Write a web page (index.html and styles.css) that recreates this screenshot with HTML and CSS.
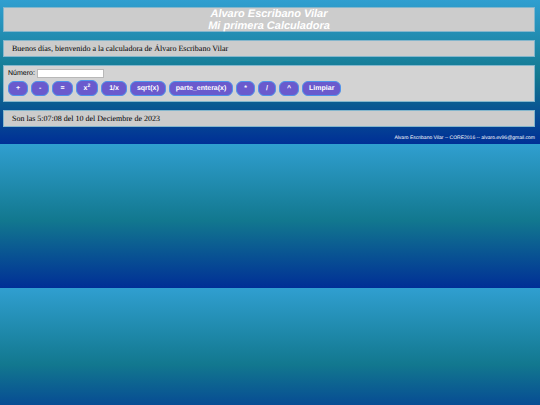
FILE: index.html
```
<!DOCTYPE html>
<html lang="es">
<head>
  <meta charset="UTF-8">
  <meta name="viewport" content="width=device-width, initial-scale=1.0">
  <title>Mi primera Calculadora</title>
  <link rel="stylesheet" href="styles.css">
</head>
<body>

  <header class="titulo">
    <h1>Alvaro Escribano Vilar<br>Mi primera Calculadora</h1>
  </header>

  <div class="mensaje">Buenos días, bienvenido a la calculadora de Álvaro Escribano Vilar</div>

  <main class="calculadora">
    <div class="entrada">
      <label for="numero">Número:</label>
      <input type="text" id="numero">
    </div>
    <div class="botones">
      <button type="button">+</button>
      <button type="button">-</button>
      <button type="button">=</button>
      <button type="button" class="potencia">x<sup>2</sup></button>
      <button type="button">1/x</button>
      <button type="button" class="largo">sqrt(x)</button>
      <button type="button" class="largo">parte_entera(x)</button>
      <button type="button">*</button>
      <button type="button">/</button>
      <button type="button">^</button>
      <button type="button" class="largo">Limpiar</button>
    </div>
  </main>

  <div class="mensaje">Son las 5:07:08 del 10 del Deciembre de 2023</div>

  <footer class="pie">Alvaro Escribano Vilar -- CORE2016 -- alvaro.ev96@gmail.com</footer>

</body>
</html>
```

FILE: styles.css
```
* {
  box-sizing: border-box;
}

/* El degradado se repite cada vez que termina el contenido */
body {
  display: flex;
  flex-direction: column;
  gap: 8px;
  margin: 0;
  padding: 7px 5px 3px 3px;
  font-family: "Liberation Sans", Arial, sans-serif;
  text-rendering: geometricPrecision;
  background: linear-gradient(#309fd0, #12788f 53%, #002f96);
}

.titulo, .mensaje, .calculadora {
  border: 1px solid #84b6cc;
  background-color: #cccccc;
}

.titulo {
  height: 25px;
}

.titulo h1 {
  margin: 0;
  color: white;
  font-size: 11px;
  font-style: italic;
  line-height: 12px;
  text-align: center;
}

.mensaje {
  padding: 0 8px;
  font-family: "Liberation Serif", "Times New Roman", serif;
  font-size: 8px;
  line-height: 15px;
}

.calculadora {
  padding: 3px 4px 5px;
  background-color: #d3d3d3;
}

.entrada {
  display: flex;
  align-items: center;
  gap: 2px;
  font-size: 7px;
  line-height: 9px;
}

.entrada input {
  width: 67px;
  height: 9px;
  padding: 0 1px;
  border: 1px solid #b8b8b8;
  background-color: white;
  font-size: 7px;
}

.botones {
  display: flex;
  align-items: flex-end;
  gap: 3px;
  margin-top: 2px;
}

button {
  padding: 3px 7px;
  border: 1px solid #4f94ec;
  border-radius: 6px;
  background-color: #6a5acd;
  color: white;
  font-family: inherit;
  font-size: 7px;
  font-weight: bold;
  line-height: 7px;
  text-rendering: inherit;
  cursor: pointer;
}

.potencia {
  padding-top: 4px;
}

.largo {
  padding: 3px 6px;
}

button sup {
  font-size: 5px;
  line-height: 0;
}

.pie {
  color: white;
  font-size: 5px;
  line-height: 6px;
  text-align: right;
}
```
